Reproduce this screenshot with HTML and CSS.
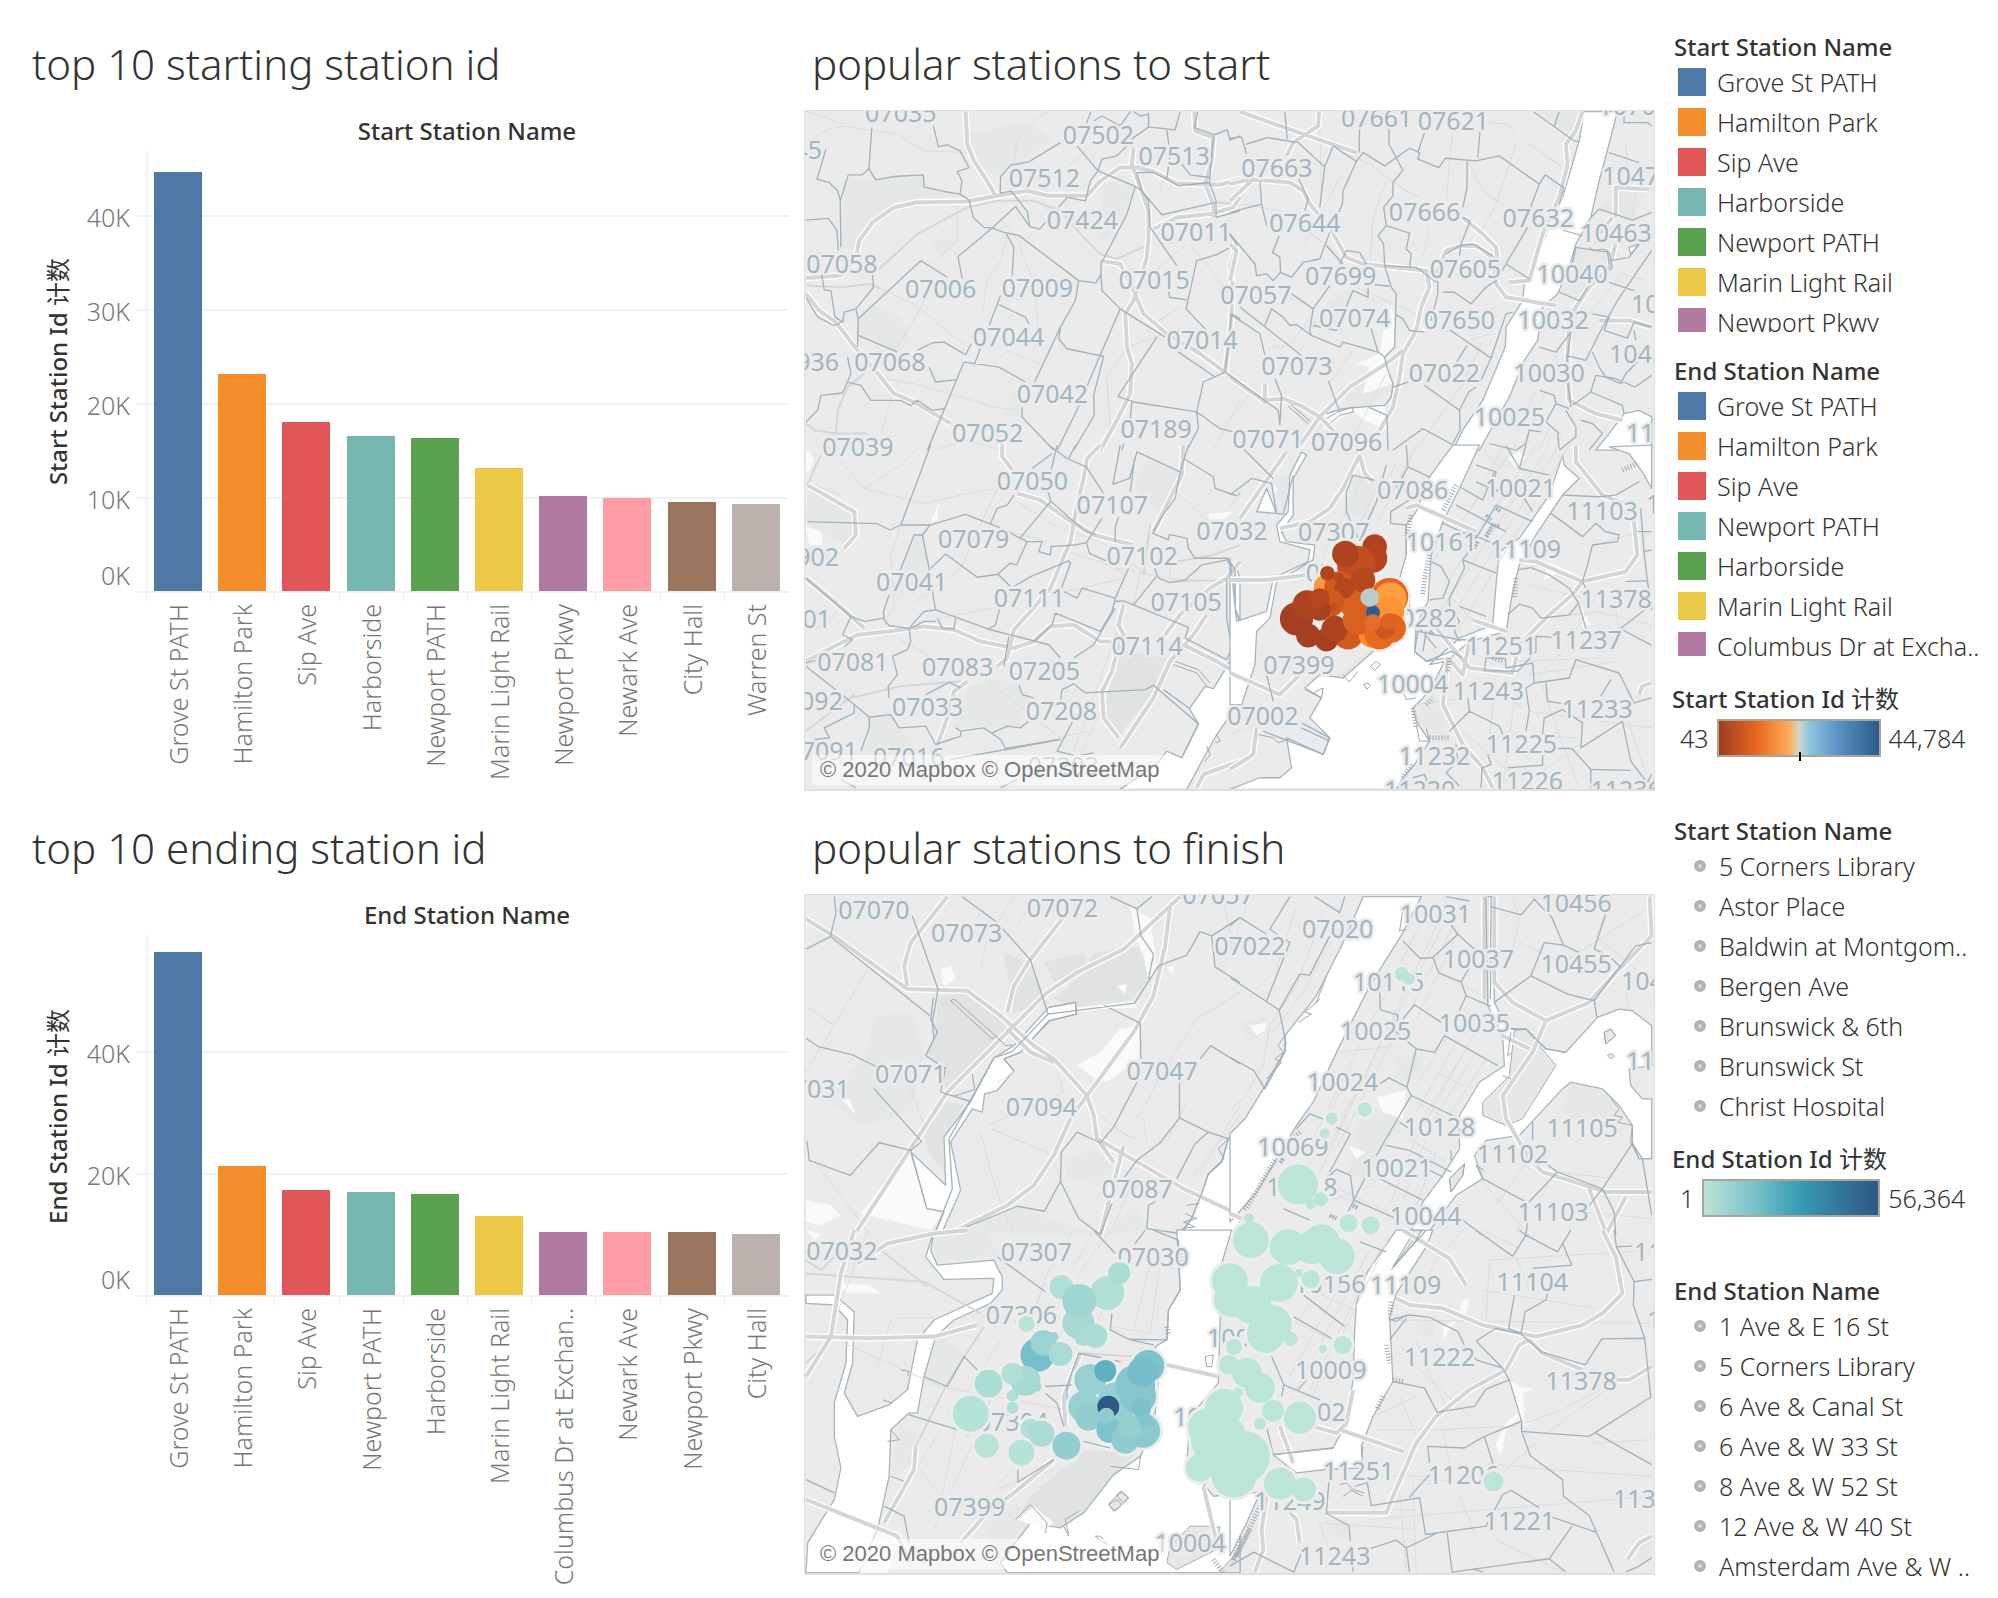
FILE: index.html
```html
<!DOCTYPE html>
<html lang="en">
<head>
<meta charset="utf-8">
<title>Bike share stations</title>
<link rel="stylesheet" href="styles.css">
</head>
<body>
<main class="dashboard">

<section class="panel">
  <h2 class="panel-title">top 10 starting station id</h2>
  <div class="chart chart-start">
    <h3 class="chart-head">Start Station Name</h3>
    <div class="axis-title"><span>Start Station Id <b>计数</b></span></div>
    <div class="axis"><span>40K</span><span>30K</span><span>20K</span><span>10K</span><span class="zero">0K</span></div>
    <div class="plot">
      <div class="bar c1" style="--v:44600"></div><div class="bar c2" style="--v:23100"></div><div class="bar c3" style="--v:18000"></div><div class="bar c4" style="--v:16500"></div><div class="bar c5" style="--v:16300"></div><div class="bar c6" style="--v:13100"></div><div class="bar c7" style="--v:10100"></div><div class="bar c8" style="--v:9900"></div><div class="bar c9" style="--v:9450"></div><div class="bar c10" style="--v:9250"></div>
    </div>
    <div class="cats"><span>Grove St PATH</span><span>Hamilton Park</span><span>Sip Ave</span><span>Harborside</span><span>Newport PATH</span><span>Marin Light Rail</span><span>Newport Pkwy</span><span>Newark Ave</span><span>City Hall</span><span>Warren St</span></div>
  </div>
</section>

<section class="panel">
  <h2 class="panel-title map-title">popular stations to start</h2>
  <div class="map">
  <svg viewBox="804 110 851 680" role="img" aria-label="Map of starting stations">
    <g transform="translate(800 100) scale(.33333)">
      <path class="shade" d="M130 240L370 225 370 258 478 285 300 305 215 365 165 450 120 440ZM172 655L215 610 300 650 330 720 290 755 172 705ZM500 100L680 60 760 120 640 190 600 230 540 200ZM910 240L1000 257 960 370 900 430ZM390 420L480 415 420 470ZM610 950L640 870 665 950Z"/>
      <path class="thin" d="M15 130L80 85 130 75 290 100 370 150 500 155M655 430L700 550 715 690M240 565L340 610 400 660 450 700 490 730M640 180L650 120 700 60 740 32M545 640L560 540 600 480 620 410M230 830L340 850 480 890 580 920 660 930M600 350L660 430M470 300L470 420 380 500M280 750L340 660 370 600M1170 430L1290 580M930 1000L920 830 980 740M240 1000L270 900 260 830M580 790L620 750 715 790M400 1050L500 1020 600 1050M980 740L1150 680M1010 560L1160 430M720 285L740 330M1080 270L1090 240M1240 1050L1320 900M800 200L900 110M15 30L130 70M1060 670L1140 620"/>
      <path class="mid" d="M15 555L120 560 205 550 240 565M230 510L350 400 500 320 590 300 700 300 780 330 850 410 900 460 950 475 1050 430M105 1000L110 930 140 860 190 820M15 970L40 990 105 1000 200 1000M1250 305L1320 310"/>
      <path id="r1a" class="casing" d="M15 532L120 525 165 475 175 420 215 365 280 320 345 305 500 302 590 285 680 270 740 285 860 285 900 240 960 200 1010 200 1060 212 1130 248 1260 252 1320 235M495 32L500 130 520 180 550 225 585 285M15 580L55 630 105 665 170 750 235 825 280 880 340 905 450 970M1000 140L995 190 1020 260 1045 330 1045 410 1040 470 1000 600 975 640 980 740 995 790 990 880 950 960 900 1050M900 480L960 490 1000 570 1030 640 1100 700 1200 760 1275 815M1183 32L1185 90 1240 110 1235 180 1215 250 1240 310 1240 350M1060 385L1130 350 1230 340 1300 320 1320 290M1275 815L1290 700 1300 560 1290 500 1310 430M605 1030L605 1050"/>
      <use href="#r1a" class="road"/>
      <path class="zip" d="M213 80L204 203 185 222 142 222 118 300 110 270 85 245 48 235 75 145M204 203L225 237 280 227 368 222 370 258 430 272 478 280 505 297 518 350 550 380 575 382 610 395 655 404 835 540 887 547M398 75L413 137 440 132 478 150 505 200 470 212 484 240 478 280M118 300L120 440M15 358L82 353 108 388 112 450M780 125L685 183 630 193 600 228 599 277 632 270 680 332 688 378 718 385 735 365M575 382L645 317 688 378M575 382L472 468 485 535M618 400L640 440 635 525M830 135L893 210 870 240 855 300 800 290 775 320M893 210L1005 257 980 340 902 490 902 520 887 547M893 210L905 175 950 165 975 140 1000 110 1045 78 1045 35M1045 78L1125 87 1140 32M1000 32L1020 45 1045 40M855 75L872 32M880 60L905 45 960 75 990 32M1193 32L1183 80 1243 102 1238 130 1228 245 1248 300 1248 350 1320 330M1243 102L1282 87 1290 118 1320 105M1010 215L1060 215 1100 235 1135 255 1228 245M1100 235L1110 160 1100 87M1025 270L1085 342 1248 305M1005 257L1025 270 1045 300 1050 380 1130 495M1010 215L1025 270M1145 190L1170 222 1230 230M172 655L360 480 440 530M172 655L165 625 218 560 215 520M165 625L130 635 125 665 102 650 90 570 70 568 62 520M15 590L50 650 100 675 130 660M172 655L170 740M172 705L290 755M350 750L395 727 430 725 495 763 512 730M140 770L150 820 125 878 60 885 50 930 15 965M140 845L180 855 210 900 300 900 330 915 350 900 395 930 430 925M385 800L405 845 465 838M380 1050L490 785 595 800 675 845M520 795L600 585M595 612L675 650 685 670M835 540L825 600 780 680 700 850M780 680L775 715 800 745 910 768 880 885 882 945 820 1050M902 520L905 570 960 625 1095 710M960 625L895 775 830 930 770 1050M665 920L665 950 760 1050M1070 710L953 888 1000 905 1190 935 1210 845 1275 815 1320 850M1135 755L1245 830M1275 815L1295 640 1320 655M1190 935L1195 985 1160 1050M1190 935L1260 985 1300 995M995 905L990 955M965 1050L972 1030M1310 430L1250 462 1190 480 1158 625 1220 690M1105 560L1108 590 1160 598M1280 388L1310 430"/>
    </g>
    <g transform="translate(1230 100) scale(.33333)">
      <path class="shade" d="M300 600L370 560 350 640 300 690 245 670ZM1050 32L1035 120 940 32ZM360 860L470 780 490 870 400 920 340 925ZM170 910L210 905 300 980 250 1000ZM1040 440L1140 455 1130 520 1050 600 1000 570ZM1170 270L1240 280 1210 355 1110 325Z"/>
      <path class="water" d="M1065 32L1050 120 1000 290 950 400 900 540 885 550 880 600 830 680 828 740 760 900 700 990 670 1050 750 1050 800 960 840 890 885 780 925 720 940 620 985 580 1020 500 1040 430 1085 350 1110 240 1145 110 1165 32ZM1185 940L1230 930 1268 950 1268 1050 1100 1050 1140 1000ZM1200 440L1230 430 1205 462Z"/>
      <path class="white" d="M475 610L495 640 495 740 465 770 490 850 400 880 420 800 380 790 450 760ZM590 690L620 540 600 640 570 700ZM290 940L340 925 465 915 475 990 400 960 370 930 280 990Z"/>
      <path class="thin" d="M140 80L300 130 420 190 530 270 575 290M0 320L40 310 150 330 300 440 380 560 560 640M470 240L430 350 415 600M720 190L760 270 830 320M860 130L800 310 750 400M600 380L580 470M270 80L275 300M330 230L220 440M860 110L840 70 780 65M900 130L1000 200M670 80L650 300M130 740L180 735 250 640M300 850L370 750M720 720L780 700M560 1050L700 850 760 720M0 960L60 880M920 870L860 1000M950 870L880 1040M1190 120L1200 270M1220 270L1210 350M1250 540L1180 520 1080 640M1060 620L960 800M960 980L930 1050M1000 990L980 1050M350 1050L470 820"/>
      <path id="r1b" class="casing" d="M30 32L150 75 380 155M268 32L265 75 190 125 170 165M0 250L60 235 180 245 220 270 240 310 300 380 350 470 400 490 590 510 600 560 575 620 560 690 520 760 510 830 490 920 450 990 400 1050M1060 32L1040 90 1010 130 1015 190 990 290 940 400 900 540 840 545M620 520L650 450 700 435 740 435 790 470 800 550 830 590 980 615M1110 660L1200 660 1268 680M1150 350L1110 400M1160 350L1160 260 1260 265M1160 430L1140 500 1080 560 1020 650 1015 780 1020 900 1100 940 1180 960M0 830L100 900 160 895 220 920 270 950 320 1000M200 1050L270 950 360 860 470 790 520 750M105 850L105 910M0 300L70 235M700 350L760 400 800 440 805 480M0 430L20 450 0 540"/>
      <use href="#r1b" class="road"/>
      <path class="zip" d="M165 32L172 115M48 130L112 110 205 125 285 198 270 320M0 112L35 108 50 160M310 135L380 182 340 270 338 310 315 360M310 135L285 198M380 182L400 155 465 195 540 142 570 155 565 175 628 200 648 172 740 180 810 165 930 250 948 222 1005 262M390 75L388 155M478 70L478 130 520 208 490 245 490 285 462 320 470 375 445 405 462 430 465 495 485 560 500 580 495 740 465 770M585 95L565 155M752 90L745 170M713 180L713 260 700 320M700 350L722 360 695 430 690 465M470 375L540 397 530 445 545 460 540 500M913 32L1035 120 1050 122M990 32L975 75M1005 262L990 310M930 250L900 330M895 380L830 490 900 535M830 490L800 540 770 560 725 610M650 460L690 435 730 430 790 465M600 500L625 545 625 580 605 660M640 575L675 575 725 610M465 495L560 500 620 545M270 475L300 395M290 435L340 490M330 490L350 450 390 455 410 490M270 475L220 485 185 530 152 515 130 540 110 520 80 525 75 490 0 400M152 515L150 470 128 455 148 405M0 335L95 310 110 375M95 310L90 240M205 230L235 295 225 330M185 580L250 625 240 690 245 705 330 740 340 725 445 755 465 770M250 625L300 555M105 675L125 625 160 650 180 675 200 672 245 705M30 620L215 765M250 675L320 690 370 570 415 590 415 560M420 550L480 557M425 685L445 755M495 640L520 655 540 690 585 695M465 770L475 810 490 850 485 890 465 915 400 920 340 925 290 940M490 860L535 845M0 825L145 930 150 975M135 835L155 885 150 975M295 840L330 935M415 920L472 945 475 1050M660 688L785 773 750 850M713 735L672 800M785 773L830 640 850 635M585 855L690 930 692 990 670 1030M690 930L718 875 740 860M490 1050L580 985 690 1045M0 640L90 700 105 765M1185 35L1185 65 1255 65 1268 75M1140 155L1230 185M1085 350L1110 325 1210 358 1268 335M1268 450L1240 490 1165 600 1110 700 1070 780 1010 765M1145 480L1200 470 1230 430M1030 490L1040 440 1140 455 1150 500 1130 520M990 575L1050 600 1075 560M1140 545L1215 570M1090 640L1140 650 1125 690 1195 713 1215 665 1268 680M930 740L980 755 1025 695 1010 800 1025 920M1090 755L1110 800 1130 830 1175 850 1190 820 1268 740M1215 690L1220 720M1100 825L1085 875 1180 915 1185 940M1100 825L1160 835 1218 860 1268 825M1085 875L1030 915M930 870L975 885 980 910 950 965 990 1000M980 910L1020 925M985 1000L990 1045M780 1030L860 1050 890 1030 900 990 935 995M1010 930L1040 980 1040 1010 990 1050M1055 960L1090 970 1120 1000 1080 1050"/>
      <path class="coast" d="M175 918L235 970M182 912L242 964M1000 388L1060 405M1080 440L1095 450 1120 445 1135 450 1140 490M290 955L325 935 370 920 370 935 330 945 300 970"/>
    </g>
    <g transform="translate(800 445) scale(.33333)">
      <path class="shade" d="M20 120L160 200 165 270 130 310 15 230ZM340 270L365 270 385 370 290 470 265 450ZM1140 60L1150 100 1090 200ZM1000 120L1040 40 1140 80 1085 215ZM200 820L265 800 295 850 350 930 200 930ZM500 730L600 700 690 740 650 850 550 850 460 850Z"/>
      <path class="field" d="M970 620L1100 640 1060 740 960 870 910 810 925 740 950 640Z"/>
      <path class="water" d="M1320 530L1305 490 1305 375 1283 350 1310 370 1320 400ZM1320 660L1290 650 1240 732 1215 725 1168 792 1195 838 1145 940 1100 920 1070 960 960 1035 1160 1035 1200 960 1250 870 1320 770Z"/>
      <path class="white" d="M15 10L40 40 25 80 15 80ZM15 245L60 260 65 300 25 300ZM390 230L415 170 410 225ZM1225 205L1300 200 1270 225 1230 225Z"/>
      <path class="thin" d="M80 0L190 130 370 175 480 150 580 130M190 130L300 60 360 0M250 540L280 480 270 330 300 240M420 520L600 485M330 480L480 370 590 130M650 170L760 240 900 290 1040 390M800 320L900 350 980 390M550 700L780 880M610 920L860 860M630 260L740 290M800 440L970 400M1000 480L1050 240M1080 100L1240 240M820 920L900 700 950 560M290 580L380 630M840 930L900 800M120 150L15 110M950 370L1100 400 1270 410M1110 300L1110 400M15 560L80 540 120 480"/>
      <path class="mid" d="M150 760L300 725 480 710M1130 350L1240 330 1320 300M1110 410L1320 405M15 860L80 810 160 750M20 120L45 60 60 30M1030 390L1050 240"/>
      <path id="r1c" class="casing" d="M605 0L605 35 640 80M650 145L720 165 790 215 880 270 1000 300M900 0L860 40 850 100 830 180 810 290 750 430 690 500 640 555 620 640 590 665M15 650L90 610 170 570 260 560 370 545 460 555 540 590 640 610 700 590 750 545 820 540 900 590 960 590M15 400L100 470 190 550M20 120L160 200 165 270 130 310M1150 0L1145 90 1090 200 1060 260M1220 510L1180 570 1110 650 1060 760 960 910M970 480L955 540 970 570 945 640 935 680 905 740 910 820 955 880M1150 600L1250 650 1320 690M1320 350L1280 400 1230 430 1140 510 1080 590M500 710L460 740 440 820 410 900M1190 1030L1210 990 1320 950"/>
      <use href="#r1c" class="road"/>
      <path class="zip" d="M390 0L300 240 388 240 495 208 590 245 680 290 725 290 715 320 750 330 752 305 825 300 858 293 868 325 915 347 925 325M20 230L228 236 268 255 300 240M388 240L365 270 385 370 400 470 405 495M365 270L340 270 295 385M265 450L248 500 250 525 265 543 325 550 370 500 405 495 570 555 745 600 780 640M390 370L435 327 530 397 592 388 630 425M592 388L628 355 648 360 680 290M640 425L690 395 805 348 810 355 780 440M640 150L620 180 590 190 570 235M750 170L660 278M740 130L752 170 850 255 888 270M745 0L800 40 858 65 910 145M695 70L755 25M825 0L805 40M770 0L752 75M905 220L858 293M960 0L938 118 988 100 1010 20 1140 80 1165 0M1003 40L990 140M1150 40L1240 95 1245 130 1310 152 1320 145M1140 80L1125 160 1085 215 1058 265 1105 285 1108 268 1160 280 1165 310 1185 340 1283 340 1305 375 1305 490 1320 530M1283 345L1205 360 1155 405 1110 413 1075 400 1063 370M945 290L945 245 955 215M985 370L945 460 845 430 830 460 790 440M1068 395L1000 480M945 460L935 500 900 560 765 505M945 470L970 468 1165 548 1155 580 1280 645M1280 400L1280 520 1295 610 1280 645M765 505L755 540 700 590M600 480L585 540 562 555M625 575L610 665M655 720L665 750 700 760M405 530L370 530 330 550M410 520L425 550 460 552 465 520M15 400L150 515 190 530 250 520M150 515L125 570 155 585 130 605M15 665L160 780 205 818 205 850 180 920M15 655L70 640M325 550L330 590 320 615 275 635 290 690 262 725 265 760M205 818L270 810 295 850 375 845 405 900 480 875 480 860 550 850 600 885 615 912 780 885M375 750L445 713 480 730M465 850L480 860M575 865L620 845 660 850 690 825M780 770L785 735 820 718 855 745 1035 735 1060 722 1195 838 1145 940M820 825L770 920 830 935 880 925M820 640L880 600 915 540 945 490M160 780L160 805 70 850 85 880 40 885M1090 735L1168 792M450 945L780 885M600 1030L650 1005M120 1005L165 1030"/>
      <path class="coast" d="M1120 660L1190 685 1220 725M1125 650L1195 675 1230 715M1220 905L1230 930 1215 950M1250 870L1260 890 1245 895"/>
    </g>
    <g transform="translate(1230 445) scale(.33333)">
      <path class="shade" d="M130 100L190 90 160 208ZM370 90L435 105 415 225 350 200ZM300 700L420 620 450 560 400 700 350 700ZM770 30L860 30 850 70 800 70ZM580 780L650 770 640 880 560 830Z"/>
      <path class="water" d="M670 0L600 95 560 200 530 240 530 330 510 400 540 450 540 500 430 620 340 700 270 690 225 730 275 760 240 820 300 880 280 930 170 880 185 970 150 1000 90 1000 0 1035 500 1035 520 1000 555 960 600 890 560 830 550 790 600 740 650 640 590 650 555 620 560 540 595 470 605 330 640 230 690 130 750 0ZM215 20L180 90 175 200 140 240 150 290 240 315 235 350 130 400 110 500 20 530 0 340 0 780 35 780 75 660 80 560 120 520 140 410 250 345 255 300 170 290 155 260 190 210 190 100 230 30ZM80 200L110 130 140 205ZM1000 30L960 150 870 280 810 320 800 420 790 540 690 580 600 660 650 650 720 590 830 560 850 440 870 360 920 270 1000 150 1050 100 1005 60ZM1140 5L1268 0 1268 130 1240 80 1200 25Z"/>
      <path class="white" d="M835 40L870 20 890 40 860 65ZM130 120L145 130 130 150ZM960 350L1060 400 990 380 940 410ZM1050 475L1085 540 1060 550Z"/>
      <path class="thin" d="M1020 0L660 600M990 0L640 560M960 0L620 520M920 0L650 420M860 0L610 350M820 0L720 200M400 100L280 330M470 60L350 330M500 50L420 220M560 0L440 240M640 430L760 560M620 520L700 560M900 690L1170 650M900 800L1268 850M860 650L1110 640M820 870L1050 880M930 700L1000 900 1050 1030M1110 440L1000 620 930 690M1150 420L1170 560M860 730L820 1030M1190 800L1220 900 1250 980M120 560L240 420M560 780L700 760M700 860L860 1000M1100 300L1230 260M900 420L1060 460M960 520L1100 500 1268 540M800 690L780 880M740 700L880 790M870 1030L1050 900M0 870L100 830M40 120L0 190"/>
      <path id="r1d" class="casing" d="M390 30L340 130 300 190 240 230 150 250M390 30L405 85 430 110M530 190L560 180 740 260M0 405L110 405 230 390M0 685L150 750 220 680M1040 0L1040 50 1120 150 1210 185 1225 330 1190 380 1060 410 920 350 870 345M1060 410L1030 450 960 510 870 600 850 685 720 670 620 550M655 640L640 780 700 900 760 970 790 1030M720 590L700 690 655 640M730 525L830 560M1230 750L1240 725 1268 715M80 850L70 930 0 975M30 220L170 20"/>
      <use href="#r1d" class="road"/>
      <path class="zip" d="M530 0L535 65 602 97M0 150L65 100 125 115 140 205 160 208 190 90M30 0L130 100M350 200L350 140 370 90 435 105M350 200L385 280M470 60L440 170 415 225M535 65L500 130M555 155L483 200 483 235 530 240 530 330M740 60L800 80 790 130 885 160 910 200M690 125L760 165 795 80M740 280L800 180 910 230M640 235L740 280M870 70L890 0M870 70L830 0M870 70L960 90M700 345L800 385M700 345L725 310M605 350L635 365 660 410 640 460 600 465M700 345L705 370 660 460 660 480 690 530 675 560 690 590M690 485L770 515M740 110L830 150M680 180L830 260M800 300L710 260M965 205L1060 275 1100 235 1130 260 1170 270 1165 290 1090 300 1075 360M1000 150L1110 155 1160 150 1230 110M1225 260L1268 260M1245 320L1268 315M1190 410L1255 407 1268 495M1235 190L1245 320 1255 407M865 375L905 368 960 390 1020 430 1048 475 1070 550M835 510L870 478 910 490 935 520 1020 510 1048 475M1075 360L1060 410 1070 430M920 575L970 577M1150 570L1268 480M1180 555L1268 602M920 575L920 620 865 680 765 678 770 640 828 640 830 670 910 655 915 715 1020 700 1040 645 1170 685 1215 775 1268 760M950 708L955 770 1005 778M1145 705L1115 755M940 870L945 820 1000 795 1060 835 1055 910 1180 830 1205 950 1255 1015 1268 990M960 912L1028 912 1085 975 1205 978M1085 975L1085 1030M890 860L900 800 890 730 915 715M715 760L720 800 810 845 820 870M720 800L660 860M775 930L785 960 758 970 755 1030M835 970L940 962 940 930M680 900L685 950 650 985 690 1025M550 1000L585 990 600 1030M700 640L665 620 590 650 555 620 565 560 690 585 740 585M570 550L620 610M590 560L580 620M110 690L130 770M215 850L300 890M100 860L280 930 300 880 215 835"/>
      <path class="coast" d="M422 665L440 650 452 660 435 677ZM402 720L415 715 422 725 412 733ZM560 840L570 890 600 890 590 850M225 735L275 760 280 730 250 745M85 870L130 880 145 895 170 885M520 740L530 765 560 760M340 690L358 712 385 680"/>
      <path class="piers" d="M680 120L640 200M600 330L585 400M585 400L580 450M545 210L530 280M660 640L655 680M590 780L610 760M550 790L560 850M600 880L660 880M545 960L520 1000M860 400L855 460M790 640L825 650M1180 75L1225 55"/>
      <path class="blocks" d="M770 210L785 225M770 275L790 240 810 245M745 290L735 310M800 190L815 200M600 560L615 570"/>
    </g>
    <g class="labels">
      <text x="900" y="121">07035</text><text class="end" x="821" y="158">45</text><text x="1098" y="143">07502</text><text x="1174" y="164">07513</text><text x="1044" y="186">07512</text><text x="1082" y="228">07424</text><text x="1196" y="240">07011</text><text x="841" y="272">07058</text><text x="940" y="297">07006</text><text x="1037" y="296">07009</text><text x="1154" y="288">07015</text><text x="1008" y="346">07044</text><text x="1202" y="349">07014</text><text class="end" x="838" y="371">07936</text><text x="889" y="371">07068</text><text x="1052" y="403">07042</text><text x="1156" y="438">07189</text><text x="987" y="442">07052</text><text x="857" y="456">07039</text>
      <text x="1377" y="126">07661</text><text x="1454" y="129">07621</text><text x="1277" y="176">07663</text><text x="1305" y="231">07644</text><text x="1425" y="220">07666</text><text x="1539" y="226">07632</text><text x="1617" y="241">10463</text><text x="1635" y="114">10705</text><text class="start" x="1603" y="184">10471</text><text x="1341" y="284">07699</text><text x="1466" y="277">07605</text><text x="1573" y="282">10040</text><text x="1256" y="303">07057</text><text x="1355" y="327">07074</text><text x="1460" y="329">07650</text><text x="1554" y="329">10032</text><text class="start" x="1632" y="312">10468</text><text x="1297" y="375">07073</text><text class="start" x="1610" y="363">10452</text><text x="1445" y="382">07022</text><text x="1550" y="382">10030</text><text x="1510" y="426">10025</text><text class="start" x="1627" y="442">11370</text><text x="1268" y="448">07071</text><text x="1347" y="451">07096</text>
      <text x="1032" y="490">07050</text><text x="1112" y="514">07107</text><text x="973" y="548">07079</text><text class="end" x="838" y="566">07902</text><text x="1232" y="540">07032</text><text x="1142" y="565">07102</text><text x="911" y="591">07041</text><text x="1029" y="607">07111</text><text x="1186" y="611">07105</text><text class="end" x="830" y="628">07901</text><text x="852" y="671">07081</text><text x="957" y="676">07083</text><text x="1044" y="680">07205</text><text x="1147" y="655">07114</text><text class="end" x="842" y="710">07092</text><text x="927" y="716">07033</text><text x="1061" y="720">07208</text><text class="end" x="857" y="761">07091</text><text x="908" y="767">07016</text><text x="1063" y="776">07203</text>
      <text x="1413" y="499">07086</text><text x="1521" y="497">10021</text><text x="1603" y="520">11103</text><text class="start" x="1647" y="513">11372</text><text x="1334" y="541">07307</text><text x="1442" y="551">10161</text><text x="1526" y="558">11109</text><text x="1617" y="608">11378</text><text class="start" x="1306" y="582">07306</text><text x="1422" y="627">10282</text><text x="1502" y="655">11251</text><text x="1587" y="649">11237</text><text x="1299" y="674">07399</text><text x="1413" y="693">10004</text><text x="1489" y="700">11243</text><text x="1598" y="718">11233</text><text x="1263" y="725">07002</text><text x="1522" y="754">11225</text><text x="1435" y="766">11232</text><text x="1528" y="791">11226</text><text x="1420" y="800">11220</text><text x="1627" y="800">11236</text>
    </g>
    <g transform="translate(1230 445) scale(.33333)">
      <g class="halo halo-start"><use href="#dots-start"/></g>
      <g id="dots-start">
        <circle cx="285" cy="425" r="33" fill="#fb9a3c"/><circle cx="435" cy="305" r="37" fill="#b0431f"/><circle cx="430" cy="340" r="43" fill="#b44420"/><circle cx="380" cy="360" r="58" fill="#c04e20"/><circle cx="347" cy="327" r="40" fill="#ad431f"/><circle cx="330" cy="425" r="46" fill="#d3591d"/><circle cx="375" cy="470" r="50" fill="#d9601e"/><circle cx="345" cy="430" r="31" fill="#b5471f"/><circle cx="400" cy="405" r="37" fill="#b5471f"/><circle cx="328" cy="398" r="14" fill="#b5471f"/><circle cx="293" cy="385" r="22" fill="#ad4520"/>
        <circle cx="300" cy="475" r="43" fill="#cf5a1e"/><circle cx="310" cy="487" r="14" fill="#c2511f"/><circle cx="270" cy="495" r="33" fill="#a94020"/><circle cx="200" cy="522" r="50" fill="#a63f22"/><circle cx="232" cy="480" r="44" fill="#ad4420"/><circle cx="270" cy="460" r="30" fill="#b5471f"/><circle cx="235" cy="572" r="36" fill="#a63f22"/><circle cx="355" cy="568" r="46" fill="#d05a1e"/><circle cx="290" cy="585" r="35" fill="#a63f22"/><circle cx="315" cy="553" r="40" fill="#ad4420"/>
        <circle cx="480" cy="455" r="56" fill="#e6631e"/><circle cx="482" cy="460" r="49" fill="#fd9e3f"/><circle cx="425" cy="570" r="38" fill="#fb8c30"/><circle cx="480" cy="500" r="44" fill="#fd9438"/><circle cx="385" cy="525" r="46" fill="#d9601e"/><circle cx="450" cy="568" r="46" fill="#e8691d"/><circle cx="485" cy="550" r="44" fill="#e3651f"/><circle cx="465" cy="552" r="31" fill="#cf571f"/><circle cx="430" cy="503" r="21" fill="#2c5d92"/><circle cx="430" cy="532" r="24" fill="#e36f2a"/><circle cx="477" cy="530" r="24" fill="#dd6120"/><circle cx="420" cy="458" r="28" fill="#bacdce"/>
      </g>
    </g>
  </svg>
  <p class="credit">© 2020 Mapbox © OpenStreetMap</p>
  </div>
</section>

<aside class="side">
  <h3 class="legend-head">Start Station Name</h3>
  <ul class="legend"><li><i class="c1"></i>Grove St PATH</li><li><i class="c2"></i>Hamilton Park</li><li><i class="c3"></i>Sip Ave</li><li><i class="c4"></i>Harborside</li><li><i class="c5"></i>Newport PATH</li><li><i class="c6"></i>Marin Light Rail</li><li><i class="c7"></i>Newport Pkwy</li></ul>
  <h3 class="legend-head">End Station Name</h3>
  <ul class="legend"><li><i class="c1"></i>Grove St PATH</li><li><i class="c2"></i>Hamilton Park</li><li><i class="c3"></i>Sip Ave</li><li><i class="c4"></i>Newport PATH</li><li><i class="c5"></i>Harborside</li><li><i class="c6"></i>Marin Light Rail</li><li><i class="c7"></i>Columbus Dr at Excha..</li></ul>
  <h3 class="legend-head ramp-head">Start Station Id <b>计数</b></h3>
  <div class="ramp ramp-start"><span>43</span><div class="ramp-bar"></div><span>44,784</span></div>
</aside>

<section class="panel">
  <h2 class="panel-title">top 10 ending station id</h2>
  <div class="chart chart-end">
    <h3 class="chart-head">End Station Name</h3>
    <div class="axis-title"><span>End Station Id <b>计数</b></span></div>
    <div class="axis"><span>40K</span><span>20K</span><span class="zero">0K</span></div>
    <div class="plot">
      <div class="bar c1" style="--v:56300"></div><div class="bar c2" style="--v:21150"></div><div class="bar c3" style="--v:17200"></div><div class="bar c4" style="--v:16900"></div><div class="bar c5" style="--v:16550"></div><div class="bar c6" style="--v:12950"></div><div class="bar c7" style="--v:10350"></div><div class="bar c8" style="--v:10330"></div><div class="bar c9" style="--v:10320"></div><div class="bar c10" style="--v:10000"></div>
    </div>
    <div class="cats"><span>Grove St PATH</span><span>Hamilton Park</span><span>Sip Ave</span><span>Newport PATH</span><span>Harborside</span><span>Marin Light Rail</span><span>Columbus Dr at Exchan..</span><span>Newark Ave</span><span>Newport Pkwy</span><span>City Hall</span></div>
  </div>
</section>

<section class="panel">
  <h2 class="panel-title map-title">popular stations to finish</h2>
  <div class="map">
  <svg viewBox="804 894 851 680" role="img" aria-label="Map of ending stations">
    <g transform="translate(800 885) scale(.33333)">
      <path class="field" d="M412 330L500 320 600 390 620 440 440 620 400 520 375 500 405 440ZM610 200L690 230 740 350 640 380ZM730 230L850 200 860 240 760 290ZM440 650L490 655 430 760 440 870 380 800 370 740ZM880 200L1040 180 1050 280 980 350 830 370 760 340 850 260Z"/>
      <path class="shade" d="M220 390L330 380 370 500 330 680 180 720 80 640 200 500ZM790 820L880 790 940 850 900 900 800 880ZM1000 960L1040 1030 920 1050ZM450 1040L650 965 900 1050Z"/>
      <path class="water" d="M330 800L378 970 430 980 400 1050 420 1050 480 915 450 770 515 670 545 680 552 625 590 615 640 555 610 520 660 500 745 405 830 385 825 350 745 365 640 480 580 517 510 648 430 755 435 900ZM1320 740L1285 760 1265 830 1225 865 1210 910 1175 1000 1140 1050 1320 1050Z"/>
      <path class="white" d="M325 795L378 970 430 980 390 1035 180 985ZM15 945L90 960 120 990 60 1020 15 1010ZM990 60L1050 100 1070 240 1045 290 1030 210 1010 160ZM830 540L900 500 960 430 1020 420 1015 520 920 590 870 570ZM420 250L450 240 465 280 430 300ZM120 640L145 640 165 690ZM950 300L980 295 975 325ZM1100 245L1125 240 1115 262ZM830 365L1000 345 1010 365 910 370 830 380Z"/>
      <path class="thin" d="M200 250L15 560M50 840L210 1050M1010 700L1100 540 1190 400 1320 320M900 690L980 750 1010 760M570 730L740 800 780 870M590 590L640 560M540 740L570 860 600 950 640 1050M15 360L100 420M770 560L790 620 560 720M1180 870L1240 790 1320 660M1200 860L1260 770 1320 690M1100 770L1160 650M930 1050L1000 880M1030 700L1040 770M1270 240L1300 200 1270 32M320 580L370 720M640 32L560 160 540 250M700 32L650 120"/>
      <path id="r2a" class="casing" d="M15 100L90 145 320 310 500 315 600 390 700 480 760 520 860 630 880 690 890 760 940 830M160 1050L440 620 620 440 740 320 830 260 970 190 1140 32M1110 60L1095 180 1060 330 1000 440 860 630 810 700 760 810 700 900 620 960 440 1050M320 300L310 240 330 170 440 32M800 80L690 220 640 300 620 380M890 760L1150 910 1320 990M620 430L690 500 760 530M970 780L900 1050"/>
      <use href="#r2a" class="road"/>
      <path class="zip" d="M100 32L105 80 88 152 15 190M88 152L388 390M335 90L412 310 395 410 400 460 375 510 435 550M485 32L590 110 690 222 743 385 1003 352 1075 240 1160 208 1200 137 1235 150 1320 95M1235 150L1245 243 1320 290M930 32L1010 68 1055 32M1010 68L1022 150 1060 205 1045 280M910 358L1020 412 1022 520M743 385L635 498 580 517 445 760 455 910 400 1050M15 458L50 482 155 508 230 545M220 610L362 768 330 795 235 772 148 870 25 825 18 768M330 795L378 970 430 980M420 620L510 648M1010 590L940 725 900 772 830 740 783 800 780 888 835 1000 900 1048 935 955M780 888L732 978 650 963 440 1050M1138 590L1138 697 1080 772 1010 825 970 880M1138 697L1225 740 1285 760 1265 830 1225 865 1210 910 1175 1000 1140 1045 1040 1030 1045 960 1065 950M1200 520L1232 480 1320 535M1225 740L1185 775 1130 880M1285 760L1320 720M398 335L390 400 410 440 375 510"/>
      <path class="coast" d="M450 345L460 340 585 450 575 460ZM585 450L615 480 635 478M435 545L420 620M515 565L522 612 460 632M745 365L825 350 827 385 750 405 700 455M640 555L610 520 660 500M1285 760L1255 790 1272 820 1225 865M1160 960L1198 955M1155 985L1190 1000 1150 1010 1185 1025 1145 1030"/>
    </g>
    <g transform="translate(1230 885) scale(.33333)">
      <path class="shade" d="M30 410L110 390 120 430 60 470ZM495 520L560 500 580 540 530 600ZM440 660L520 700 400 880 350 870 390 700ZM1020 590L1120 610 1190 700 1100 740 1000 680ZM920 540L975 545 930 600Z"/>
      <path class="water" d="M400 32L350 150 290 270 260 330 165 450 165 495 100 610 45 700 0 745 0 1010 10 1000 80 920 140 820 200 720 250 650 330 480 420 300 520 140 575 32ZM790 32L775 32 775 360 820 450 825 540 750 590 690 690 690 790 640 870 580 950 540 1050 590 1050 680 930 760 880 735 810 770 765 870 750 1000 610 1025 590 1120 610 1170 660 1210 720 1210 770 1230 820 1268 820 1268 640 1240 640 1205 600 1200 550 1268 540 1268 420 1210 375 1170 370 1105 395 1010 500 950 490 890 430 835 430 795 350Z"/>
      <path class="white" d="M440 635L530 615 520 700 460 680ZM355 780L380 790 410 800 380 820ZM60 420L110 410 105 435 80 450Z"/>
      <path class="land" d="M855 435L890 430 980 540 880 700 830 720 760 690 760 650 840 570ZM705 835L660 880 665 920 700 870ZM1125 440L1145 430 1160 450 1130 475ZM1135 510L1145 503 1157 512 1145 520Z"/>
      <path class="thin" d="M600 60L230 800M640 80L270 860M690 130L560 400M670 120L540 380M650 100L480 430M470 440L300 780M500 440L320 790M540 400L520 460M770 380L560 760M680 470L560 680M710 490L580 700M740 500L600 720M770 520L640 720M650 460L560 600M560 760L480 960M590 760L520 950M620 800L560 960M420 560L330 700M370 540L300 680M500 480L330 500M420 400L520 440M560 650L690 720M540 760L650 830M480 900L580 940M620 560L700 600M60 32L0 200M200 60L140 250 60 330M280 80L200 300 120 420 100 540 40 640 0 670M330 120L220 320 130 440M870 170L1000 230 1268 60M900 32L1130 60M840 240L870 100 850 32M1150 32L1100 150 1268 290M1180 260L1268 350M760 890L900 1050M980 860L1160 880M900 820L800 960M1060 980L1268 1000M960 900L860 1040M1190 300L1200 370M660 280L760 330M430 900L260 960M400 960L180 880M500 990L300 900"/>
      <path id="r2b" class="casing" d="M795 32L795 290 850 350 950 405 1080 350 1160 260 1268 150 1262 32M950 405L910 500 820 630 830 700 900 820 940 860 1130 920 1268 920M820 450L900 490M1080 910L1130 1040M1190 935L1130 1050M0 985L60 1010 110 1040M765 32L765 340"/>
      <use href="#r2b" class="road"/>
      <path class="zip" d="M180 32L120 130 180 170 110 345M0 120L30 95 110 145M0 275L148 373 210 265 240 268 300 150M255 32L330 80 345 32M148 373L168 470 165 500 105 610 72 555 0 515M520 165L572 218 610 215 685 145 740 195M685 145L660 110M610 215L628 262 695 288 710 330 785 362M695 288L720 245M710 330L690 375M785 62L875 87 915 40 968 95 1003 178 945 170 905 270 1015 325 1095 345 1220 180 1268 170M905 270L795 350M1135 70L1095 190 1140 210 1175 245M1003 178L1050 200M1095 345L1103 395M770 32L775 360M785 32L783 340M450 320L452 372 505 388 500 440 560 490 615 500 645 450 805 540M520 400L555 357 635 410M560 490L532 605 478 577 450 595M532 605L545 630 440 810M405 880L350 990M545 630L690 700M510 710L540 730M468 780L540 795 665 860M665 795L665 825M600 855L640 875M375 945L500 1000M450 880L580 945M240 685L200 730M240 685L290 705M320 725L362 745 300 860M290 880L320 852 362 870 372 945M835 430L890 430 950 490 1010 500M650 32L720 45M910 710L910 765M930 820L985 860 1120 910 1210 775 1240 820 1268 820M985 860L890 960M1120 910L1065 980M1120 910L1155 980 1160 1050M760 880L890 950M1240 820L1268 990M700 1005L760 1050M895 1010L890 1050M160 970L240 1005"/>
      <path class="coast" d="M290 270L260 350 270 340 225 380 245 385 205 410M165 450L145 480 160 500 135 520 155 530 110 580M520 70L510 135 530 130M1145 640L1170 670 1155 690 1180 695 1165 710 1210 720 1205 770 1230 820M845 440L835 510 850 500M820 570L845 580M705 835L660 880 665 920 700 870ZM760 880L740 840 765 855M1125 440L1145 430 1160 450 1130 475Z"/>
      <path class="piers" d="M135 825L45 975M210 740L185 760"/>
      <path class="blocks" d="M300 990L320 1000M370 960L385 970M160 820L150 835"/>
    </g>
    <g transform="translate(800 1230) scale(.33333)">
      <path class="field" d="M640 870L690 800 850 660 1010 670 940 735 850 850 780 895 690 860Z"/>
      <path class="shade" d="M400 60L410 0 560 0 590 70 410 100ZM310 470L420 320 490 370 440 460 320 480ZM540 870L650 820 690 880 600 1000ZM290 600L345 600 340 700 270 740Z"/>
      <path class="water" d="M400 0L375 80 430 148 580 145 575 190 400 270 350 330 320 480 265 525 170 560 130 490 155 400 160 245 100 195 15 195 15 220 100 225 140 270 135 400 100 520 100 620 120 715 100 810 20 940 15 1030 175 1030 230 900 265 740 270 600 325 550 350 550 370 440 405 320 460 270 570 220 605 180 605 140 580 90 410 105 390 60ZM1130 0L1140 180 1105 240 1100 330 1065 350 1080 400 1060 600 1020 680 940 735 850 850 780 895 690 880 600 1000 620 1030 1320 1030 1320 790 1240 800 1160 700 1170 560 1255 460 1265 100 1295 0Z"/>
      <path class="white" d="M110 160L200 165 240 190 140 190ZM650 870L700 830 760 880 730 900ZM15 0L60 10 40 30ZM230 900L300 910 260 1030 175 1030ZM850 635L1010 660 940 665Z"/>
      <path class="land" d="M1100 1000L1110 950 1170 890 1230 890 1250 960 1130 1020ZM925 825L960 785 985 805 945 845ZM1255 1030L1320 960 1320 1030ZM1250 940L1235 900 1260 890Z"/>
      <path class="thin" d="M130 340L420 470 800 540M730 160L690 280M820 0L740 130 700 240M1000 50L880 300M1080 100L1050 310M940 290L1050 310M270 270L230 410M290 265L400 262M420 600L320 760M530 610L400 900M580 780L700 650M350 710L420 800M930 0L830 140M1050 100L1000 300M590 780L640 760 760 720M600 330L480 520 420 820M440 550L530 610M860 40L770 200M80 330L200 0"/>
      <path class="mid" d="M15 130L370 155 540 250M240 60L380 170M90 330L15 400M550 290L440 460 345 650 340 720 250 880M640 400L500 620M850 370L1000 380M15 90L60 120 120 60"/>
      <path id="r2c" class="casing" d="M15 320L200 325 400 320 530 285M90 320L120 130 160 0M170 100L260 40 400 10 500 0M15 810L290 920 330 1000M15 440L90 320M345 650L340 720 250 880M480 940L560 850 640 790 760 690M1100 405L1255 440M1210 770L1250 940M840 370L790 500 795 590"/>
      <use href="#r2c" class="road"/>
      <path class="zip" d="M15 750L100 790M325 555L470 600M530 420L490 380 440 470 370 440M590 80L735 185M880 0L945 70M1035 0L1005 40M1060 0L1135 30 1140 180 1105 240 1100 330 985 328 930 300 935 250M735 470L820 465M960 395L835 370 800 470 800 540M735 490L770 520 790 590M652 720L652 758 760 690M250 830L310 860 325 940M850 635L930 655M985 328L1060 345"/>
      <path class="coast" d="M645 870L690 825 740 880 735 910M790 890L805 920 795 870 835 845M930 710L1015 720 1022 675M925 825L940 845 965 825M925 825L950 810 965 825M950 800L965 785 985 805 970 820ZM260 635L295 630 270 600M300 420L325 425 320 440M245 510L275 520M885 920L910 940 920 945 900 920ZM270 740L310 755M1215 380L1240 375 1235 410 1220 410Z"/>
      <path class="piers" d="M1145 70L1150 110M1100 290L1105 310M1320 920L1300 1000M1240 990L1270 1030"/>
    </g>
    <g transform="translate(1230 1230) scale(.33333)">
      <path class="shade" d="M290 860L360 890 362 935 300 920ZM560 270L610 280 620 330 560 310ZM1230 950L1268 920 1268 990 1220 1000Z"/>
      <path class="water" d="M500 0L410 130 380 220 375 300 370 450 350 580 310 655 130 675 200 730 300 718 400 715 395 650 430 560 490 455 480 260 500 190 590 50 610 0ZM0 790L90 790 50 880 0 980Z"/>
      <path class="white" d="M640 290L680 270 660 300 640 330ZM700 210L720 205 710 250 690 245ZM840 450L870 470 915 475 880 490 885 570 870 570ZM800 640L830 580 870 545 870 560 830 600 815 680 800 650ZM870 575L910 580 885 590Z"/>
      <path class="land" d="M490 110L560 20 580 0 555 0Z"/>
      <path class="thin" d="M420 60L200 480M450 60L240 480M390 60L180 440M480 20L330 330M300 380L220 560M380 40L120 380M160 260L330 340M230 170L370 240M190 400L340 440M180 500L300 590M560 330L600 430 650 530M480 270L1268 280M700 0L620 90 560 220M780 90L1268 60M780 90L770 280M760 180L1100 235M1090 240L1090 285M550 400L720 560M510 500L560 620M440 600L680 600M600 600L860 590 1000 540 1110 480M1130 480L940 620 820 730M550 760L560 1028M510 780L530 1028M420 870L1268 800M270 880L560 900M770 700L960 720 1268 740M800 930L1000 1028M560 750L800 760M260 860L300 960M1090 640L1268 630M430 560L560 500M860 80L900 180M440 740L620 740M640 600L660 700M690 800L740 920M360 840L560 840M880 60L760 0"/>
      <path id="r2d" class="casing" d="M520 0L660 85 710 165M500 205L540 225 640 235 760 285 920 320 1060 285 1120 250 1180 190 1160 80 1120 0M900 330L870 345 830 420 720 480 620 560 560 640 490 800 470 850 290 850M330 600L520 665M150 590L190 700M180 850L200 870 210 940M110 800L95 900 100 960 75 1028M900 330L940 370 1060 420M1150 450L1200 450 1268 410M1195 990L1230 940 1268 920M215 580L320 610 350 580 370 480"/>
      <use href="#r2d" class="road"/>
      <path class="zip" d="M740 0L850 78 890 15 870 0M890 15L985 65 1025 0M1000 40L1028 105 910 115M1155 0L1162 50 1215 155 1213 225 1247 325 1265 500M1162 50L1210 48M1215 155L1268 148M855 195L838 295 875 310 888 245 950 210 960 170M740 333L800 295 875 312 935 365 1068 405 1118 327 1247 325M740 333L820 415 840 450 877 575 765 620 705 655 595 650 600 700M480 270L540 255 600 262 685 305 705 345M730 375L740 390 820 415M530 265L480 330M490 455L585 475 623 547 735 530 770 478 840 450M877 575L877 605 1080 620 1268 500M1100 610L1268 705M877 605L903 678 1000 750 1003 800 1080 858 1155 1028M765 620L795 715M600 735L538 805M410 745L425 828 570 805 588 915 770 890 820 795 845 782 930 835M955 858L1100 908M300 720L290 852 358 888 362 935M415 960L500 932 530 955 620 912M530 955L540 1028M653 910L668 1028 960 988 1028 890M960 988L1010 1028M730 1018L760 1028M0 1010L72 968 192 1028 215 970M125 380L162 465 155 500M162 465L270 510M205 480L230 450M190 260L305 325M215 190L345 290M390 35L470 65M110 590L130 675 310 655M1190 1028L1230 1010 1268 985M370 990L370 1028M490 110L590 0"/>
      <path class="coast" d="M485 120L560 30 575 0M475 265L500 275 530 255M400 650L395 680M340 800L370 780 350 760 330 765M370 780L405 790M375 770L410 760M360 780L400 800"/>
      <path class="piers" d="M470 345L480 400M485 215L480 260M490 450L520 455M460 500L440 540M90 830L20 980M60 900L10 990"/>
    </g>
    <g class="labels">
      <text x="873" y="918">07070</text><text x="1062" y="916">07072</text><text x="966" y="941">07073</text><text x="1218" y="903">07057</text><text x="1250" y="954">07022</text><text x="910" y="1082">07071</text><text class="end" x="849" y="1097">07031</text><text x="1162" y="1079">07047</text><text x="1041" y="1116">07094</text><text x="1137" y="1198">07087</text>
      <text x="1436" y="922">10031</text><text x="1338" y="937">07020</text><text x="1577" y="911">10456</text><text x="1479" y="967">10037</text><text x="1577" y="972">10455</text><text class="start" x="1622" y="989">10474</text><text x="1389" y="990">10115</text><text x="1376" y="1039">10025</text><text x="1475" y="1031">10035</text><text class="start" x="1627" y="1069">11370</text><text x="1343" y="1090">10024</text><text x="1440" y="1136">10128</text><text x="1583" y="1137">11105</text><text x="1513" y="1163">11102</text><text x="1293" y="1156">10069</text><text x="1397" y="1177">10021</text><text x="1302" y="1196">10018</text><text x="1554" y="1221">11103</text><text x="1426" y="1225">10044</text>
      <text x="841" y="1260">07032</text><text x="1036" y="1261">07307</text><text x="1153" y="1266">07030</text><text x="1021" y="1324">07306</text><text x="1012" y="1431">07304</text><text x="969" y="1516">07399</text><text x="1190" y="1553">10004</text><text class="start" x="1207" y="1347">10014</text><text class="start" x="1173" y="1426">10013</text>
      <text x="1330" y="1293">10156</text><text x="1406" y="1294">11109</text><text x="1533" y="1291">11104</text><text class="start" x="1635" y="1261">11377</text><text x="1440" y="1366">11222</text><text x="1331" y="1379">10009</text><text x="1582" y="1390">11378</text><text x="1310" y="1421">10002</text><text x="1359" y="1480">11251</text><text x="1464" y="1484">11206</text><text class="start" x="1614" y="1508">11385</text><text x="1520" y="1531">11221</text><text x="1290" y="1510">11249</text><text x="1335" y="1566">11243</text><text class="start" x="1648" y="1329">11373</text>
    </g>
    <g class="halo">
      <use href="#dots-jersey"/><use href="#dots-ny"/>
    </g>
    <g id="dots-jersey">
      <circle cx="1061" cy="1287" r="12" fill="#b0e0d5"/><circle cx="1107" cy="1293" r="17" fill="#b0e0d6"/><circle cx="1119" cy="1273" r="11" fill="#a9dcd3"/><circle cx="1078" cy="1323" r="16" fill="#a5d9d2"/><circle cx="1079" cy="1301" r="17" fill="#9fd6d1"/><circle cx="1095" cy="1336" r="12" fill="#abddd4"/><circle cx="1083" cy="1337" r="9" fill="#a8dbd4"/>
      <circle cx="1026" cy="1324" r="8" fill="#b8e4d8"/><circle cx="1037" cy="1355" r="17" fill="#76bfca"/><circle cx="1043" cy="1343" r="13" fill="#9ad3d1"/><circle cx="1053" cy="1337" r="5" fill="#9ad3d1"/><circle cx="1060" cy="1354" r="12" fill="#a8dbd4"/>
      <circle cx="988" cy="1384" r="14" fill="#abddd5"/><circle cx="1025" cy="1381" r="15" fill="#a5d9d3"/><circle cx="1012" cy="1374" r="11" fill="#b0dfd5"/><circle cx="1036" cy="1387" r="5" fill="#a5d9d3"/><circle cx="1012" cy="1396" r="6" fill="#b0dfd5"/><circle cx="1012" cy="1408" r="6" fill="#b0dfd5"/>
      <circle cx="970" cy="1414" r="18" fill="#b5e3d7"/><circle cx="986" cy="1446" r="12" fill="#b8e4d8"/><circle cx="1030" cy="1429" r="10" fill="#b0dfd5"/><circle cx="1041" cy="1434" r="13" fill="#aadcd5"/><circle cx="1021" cy="1453" r="13" fill="#b5e3d8"/><circle cx="1066" cy="1446" r="14" fill="#93cdd0"/>
      <circle cx="1090" cy="1380" r="16" fill="#98d0d1"/><circle cx="1084" cy="1407" r="16" fill="#98d0d1"/><circle cx="1088" cy="1418" r="13" fill="#93cdd0"/><circle cx="1117" cy="1402" r="20" fill="#94d0d1"/><circle cx="1135" cy="1385" r="20" fill="#87c6cc"/><circle cx="1138" cy="1396" r="18" fill="#87c6cc"/><circle cx="1148" cy="1366" r="16" fill="#7dc1ca"/><circle cx="1142" cy="1372" r="15" fill="#76bcc9"/><circle cx="1105" cy="1371" r="11" fill="#5fb0c1"/><circle cx="1109" cy="1430" r="13" fill="#7ec3cc"/><circle cx="1143" cy="1431" r="17" fill="#8cc9cf"/><circle cx="1125" cy="1440" r="14" fill="#8fcccf"/><circle cx="1141" cy="1408" r="10" fill="#7cc0cb"/><circle cx="1130" cy="1427" r="12" fill="#93d0d0"/><circle cx="1145" cy="1420" r="7" fill="#82c5cd"/><circle cx="1108" cy="1407" r="11" fill="#2c5985"/><circle cx="1106" cy="1416" r="8" fill="#8fcccf"/>
    </g>
    <g id="dots-ny" fill="#bbe5d9">
      <circle cx="1402" cy="973" r="7"/><circle cx="1409" cy="978" r="6"/><circle cx="1365" cy="1109" r="7"/><circle cx="1332" cy="1118" r="6"/><circle cx="1325" cy="1133" r="5"/><circle cx="1298" cy="1184" r="20"/><circle cx="1321" cy="1199" r="7"/><circle cx="1311" cy="1204" r="5"/><circle cx="1349" cy="1223" r="9"/><circle cx="1371" cy="1225" r="9"/><circle cx="1249" cy="1218" r="5"/><circle cx="1251" cy="1240" r="18"/><circle cx="1288" cy="1247" r="18"/><circle cx="1312" cy="1247" r="17"/><circle cx="1322" cy="1242" r="18"/><circle cx="1337" cy="1256" r="18"/><circle cx="1279" cy="1283" r="19"/><circle cx="1230" cy="1281" r="18"/><circle cx="1232" cy="1299" r="18"/><circle cx="1252" cy="1305" r="19"/><circle cx="1272" cy="1325" r="20"/><circle cx="1266" cy="1334" r="19"/><circle cx="1291" cy="1339" r="7"/><circle cx="1299" cy="1273" r="4"/><circle cx="1311" cy="1279" r="9"/><circle cx="1323" cy="1349" r="4"/><circle cx="1343" cy="1345" r="9"/><circle cx="1234" cy="1347" r="8"/><circle cx="1229" cy="1365" r="10"/><circle cx="1247" cy="1373" r="15"/><circle cx="1260" cy="1388" r="15"/><circle cx="1273" cy="1411" r="11"/><circle cx="1300" cy="1418" r="16"/><circle cx="1260" cy="1424" r="6"/><circle cx="1238" cy="1393" r="5"/><circle cx="1224" cy="1408" r="19"/><circle cx="1207" cy="1428" r="19"/><circle cx="1219" cy="1440" r="28"/><circle cx="1244" cy="1457" r="26"/><circle cx="1200" cy="1468" r="14"/><circle cx="1234" cy="1475" r="23"/><circle cx="1280" cy="1484" r="16"/><circle cx="1304" cy="1490" r="12"/><circle cx="1494" cy="1482" r="10"/>
    </g>
  </svg>
  <p class="credit">© 2020 Mapbox © OpenStreetMap</p>
  </div>
</section>

<aside class="side">
  <h3 class="legend-head">Start Station Name</h3>
  <ul class="legend points"><li><i></i>5 Corners Library</li><li><i></i>Astor Place</li><li><i></i>Baldwin at Montgom..</li><li><i></i>Bergen Ave</li><li><i></i>Brunswick &amp; 6th</li><li><i></i>Brunswick St</li><li><i></i>Christ Hospital</li></ul>
  <h3 class="legend-head ramp-head">End Station Id <b>计数</b></h3>
  <div class="ramp ramp-end"><span>1</span><div class="ramp-bar"></div><span>56,364</span></div>
  <h3 class="legend-head last-head">End Station Name</h3>
  <ul class="legend points"><li><i></i>1 Ave &amp; E 16 St</li><li><i></i>5 Corners Library</li><li><i></i>6 Ave &amp; Canal St</li><li><i></i>6 Ave &amp; W 33 St</li><li><i></i>8 Ave &amp; W 52 St</li><li><i></i>12 Ave &amp; W 40 St</li><li><i></i>Amsterdam Ave &amp; W ..</li></ul>
</aside>

</main>
</body>
</html>
```

FILE: styles.css
```css
* { box-sizing: border-box; }

body {
  margin: 0;
  background: #fff;
  color: #333;
  font-family: "Noto Sans", "Noto Sans CJK SC", sans-serif;
  font-size: 25px;
  font-weight: 300;
}

h2, h3, p, ul { margin: 0; padding: 0; font-weight: inherit; }
b { font-weight: 400; }

.dashboard {
  display: grid;
  grid-template-columns: 804fr 852fr 342fr;
  grid-template-rows: 784px auto;
}

.panel { min-width: 0; }

.panel-title {
  height: 110px;
  padding: 34px 0 0 32px;
  font-size: 42px;
  line-height: 60px;
  white-space: nowrap;
}
.map-title { padding-left: 8px; }

/* Bar charts */
.chart {
  display: grid;
  grid-template-columns: 36px 70px 1fr;
  padding: 0 16px 0 40px;
}
.chart-start { --unit: 94px; --per: 10000; grid-template-rows: 41px 442px auto; }
.chart-end { --unit: 122px; --per: 20000; grid-template-rows: 41px 362px auto; }

.chart-head {
  grid-column: 3;
  font-size: 24px;
  font-weight: 500;
  line-height: 42px;
  text-align: center;
}

.axis-title { grid-column: 1; display: flex; align-items: center; justify-content: center; }
.axis-title span {
  writing-mode: vertical-rl;
  text-orientation: sideways;
  transform: rotate(180deg);
  font-size: 24px;
  font-weight: 500;
  line-height: 36px;
  white-space: nowrap;
}

.axis {
  display: flex;
  flex-direction: column;
  justify-content: flex-end;
  padding-right: 16px;
  text-align: right;
  color: #777;
  background: repeating-linear-gradient(to top, #f1f1f1 0 2px, transparent 2px var(--unit)) right / 9px 100% no-repeat;
}
.axis span { height: var(--unit); line-height: var(--unit); }
.axis .zero { height: calc(var(--unit) / 2); line-height: 36px; display: flex; align-items: flex-end; justify-content: flex-end; }

.plot, .cats { display: grid; grid-template-columns: repeat(10, 1fr); }
.plot {
  align-items: end;
  padding-bottom: 2px;
  box-shadow: inset 2px 0 #f4f4f4;
  background: repeating-linear-gradient(to top, #f1f1f1 0 2px, transparent 2px var(--unit));
}
.bar { width: 48px; justify-self: center; height: calc(var(--v) * var(--unit) / var(--per)); }

.cats {
  grid-column: 3;
  align-items: start;
  color: #777;
  background: repeating-linear-gradient(to right, #eee 0 1px, transparent 1px 10%) top / 100% 9px no-repeat;
  padding-top: 11px;
}
.cats span {
  writing-mode: vertical-rl;
  transform: rotate(180deg);
  justify-self: center;
  line-height: 34px;
  white-space: nowrap;
}

.c1 { background: #4e79a7; }
.c2 { background: #f28e2b; }
.c3 { background: #e15759; }
.c4 { background: #76b7b2; }
.c5 { background: #59a14f; }
.c6 { background: #edc948; }
.c7 { background: #b07aa1; }
.c8 { background: #ff9da7; }
.c9 { background: #9c755f; }
.c10 { background: #bab0ac; }

/* Maps: line work is drawn at three units to the pixel */
.map { position: relative; background: #ebebeb; border: 1px solid #e0e0e0; border-bottom-width: 2px; margin-right: 1px; }
.map svg { display: block; width: 100%; height: auto; }
.map path { fill: none; stroke-linejoin: round; }
.map .shade { fill: #e6e7e7; }
.map .field { fill: #e1e3e3; }
.map .water { fill: #fff; stroke: #a6b6c0; stroke-width: 4px; }
.map .white { fill: #fafafa; }
.map .land { fill: #e6e7e7; stroke: #a6b0b6; stroke-width: 3px; }
.map .thin { stroke: #dcdcdc; stroke-width: 3px; }
.map .mid { stroke: #d6d6d6; stroke-width: 6px; }
.map .casing { stroke: var(--road-color, #fff); stroke-width: var(--road-width, 20px); }
.road { --road-color: #d5d5d5; --road-width: 12px; }
.map .zip { stroke: #a0b2bd; stroke-width: 4px; }
.map .coast { stroke: #a3a6a8; stroke-width: 3px; }
.map .piers { stroke: #a3a6a8; stroke-width: 15px; stroke-dasharray: 3 6; }
.map .blocks { stroke: #a0b1bc; stroke-width: 12px; stroke-dasharray: 6 3; }
.labels { font-size: 25px; font-weight: 400; fill: #a3b5c0; stroke: #ececec; stroke-width: 5px; stroke-linejoin: round; paint-order: stroke; text-anchor: middle; }
.labels .start { text-anchor: start; }
.labels .end { text-anchor: end; }
.halo { stroke: #ededed; stroke-width: 6px; }
.halo-start { stroke-width: 18px; }

.credit {
  position: absolute;
  left: 7px;
  bottom: 4px;
  padding: 0 8px;
  background: rgba(255, 255, 255, .55);
  color: #777;
  font-family: "Liberation Sans", sans-serif;
  font-size: 22px;
  font-weight: 400;
  line-height: 30px;
  white-space: nowrap;
}

/* Legends */
.side { padding: 33px 0 0 18px; min-width: 0; }
.legend-head { font-size: 24px; font-weight: 500; line-height: 28px; white-space: nowrap; }
.legend {
  height: 268px;
  margin: 3px 0 25px;
  overflow: hidden;
  list-style: none;
}
.legend li { display: flex; align-items: center; gap: 11px; height: 40px; padding: 0 0 4px 4px; white-space: nowrap; }
.legend i { flex: none; width: 28px; height: 28px; }
.legend.points li { padding-left: 20px; gap: 13px; }
.points i { width: 12px; height: 12px; border: 4px solid #b3b3b3; border-radius: 50%; background: #d9d9d9; }

.legend-head.ramp-head { margin: 29px 0 0 -2px; }
.ramp { display: flex; align-items: center; gap: 8px; height: 38px; margin: 6px 0 0 6px; }
.ramp-bar { flex: none; height: 38px; border: 2px solid #a9a698; }
.ramp-start .ramp-bar { width: 164px; background: linear-gradient(to right, #9e3d22, #e8681e 24%, #fdae5b 44%, #d5d5c8 50%, #93c7e2 56%, #5b93c4 74%, #2b5c8a); position: relative; }
.ramp-start .ramp-bar::after { content: ""; position: absolute; left: 50%; bottom: -6px; width: 2px; height: 9px; background: #000; }
.ramp-end .ramp-bar { width: 178px; background: linear-gradient(to right, #bce4d8, #7cc3cb 28%, #3b9fb6 53%, #347ba0 75%, #2c5985); }
.last-head { margin-top: 60px; }
```
